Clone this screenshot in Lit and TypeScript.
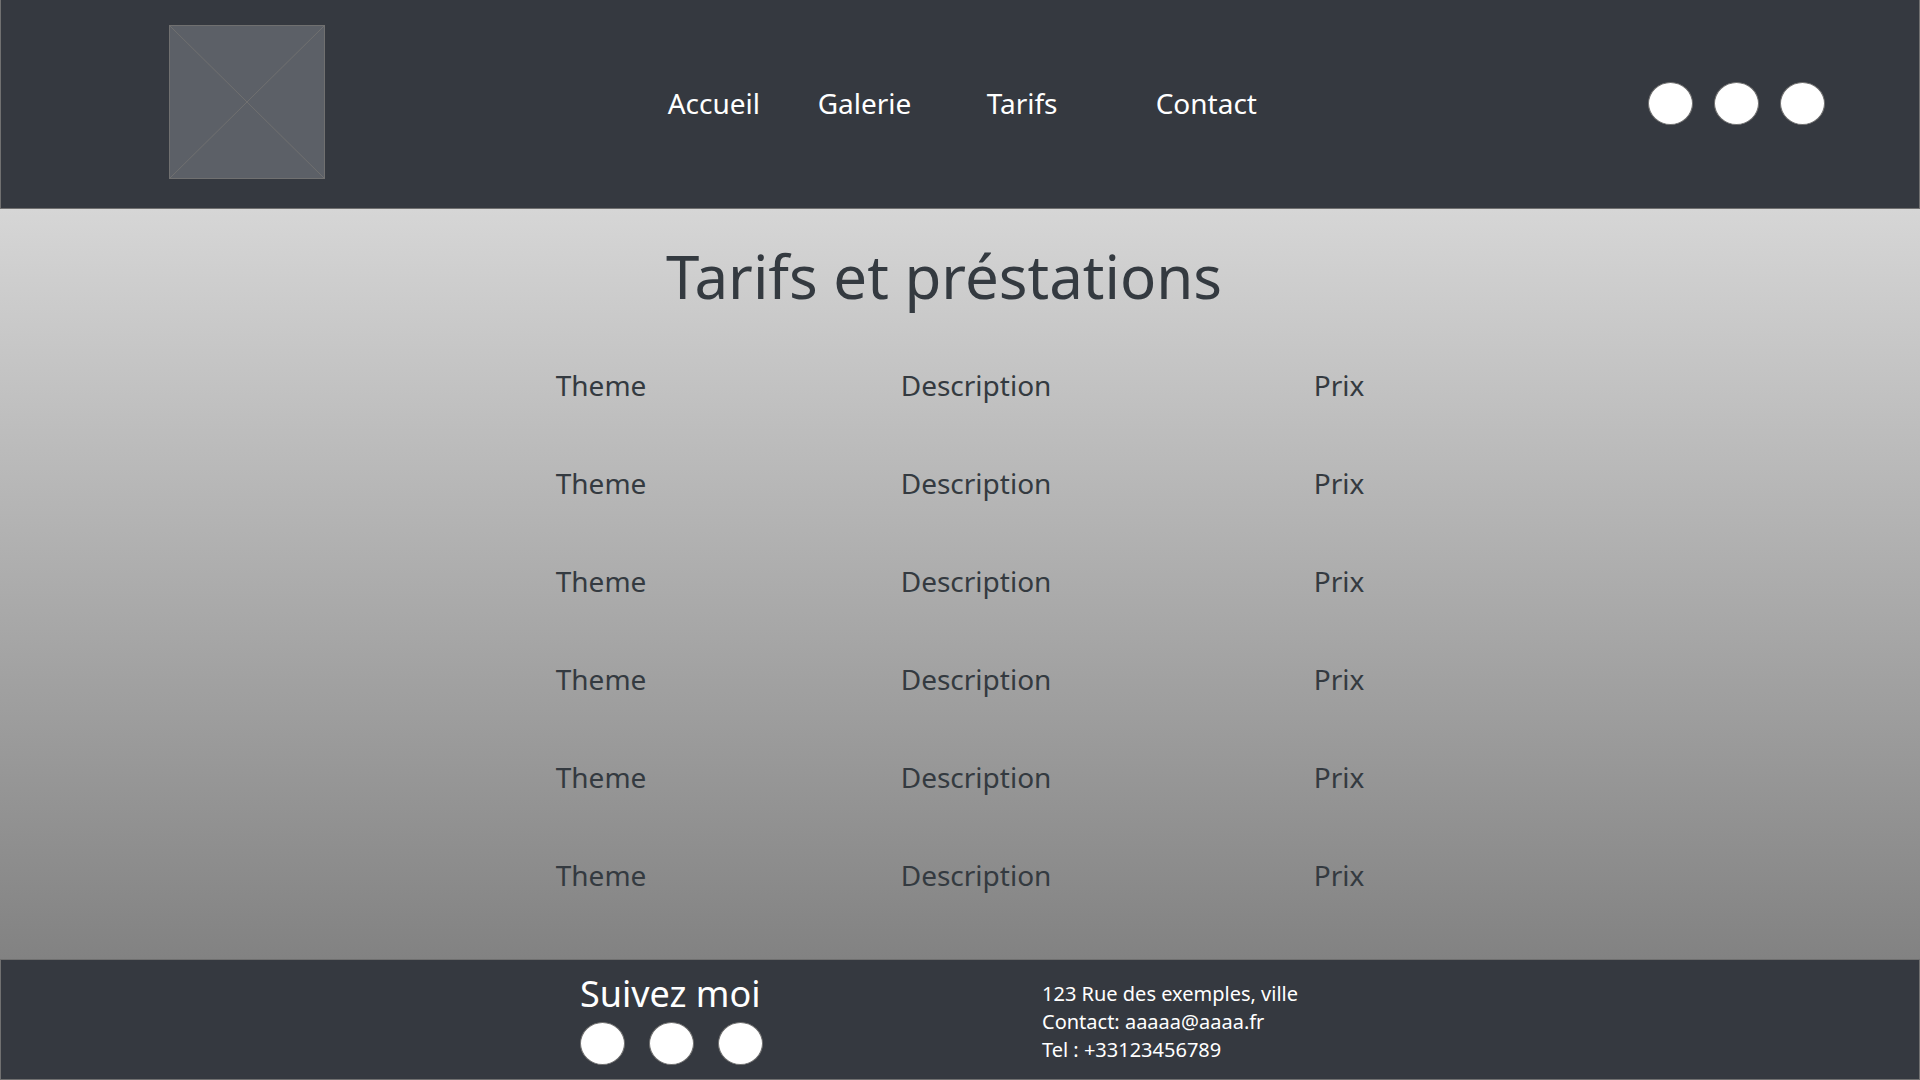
import { LitElement, html, css } from "lit";
import { customElement } from "lit/decorators.js";

const links = ["Accueil", "Galerie", "Tarifs", "Contact"];
const networks = ["Facebook", "Instagram", "Twitter"];
const rates = Array.from({ length: 5 }, () => ({
  theme: "Theme",
  description: "Description",
  price: "Prix",
}));

const dots = (className: string) => html`
  <div class="dots ${className}">
    ${networks.map((name) => html`<a class="dot" href="#" aria-label=${name}></a>`)}
  </div>
`;

@customElement("app-root")
export class AppRoot extends LitElement {
  static styles = css`
    :host {
      display: flex;
      flex-direction: column;
      min-height: 100vh;
      font-family: "Segoe UI", "Noto Sans", "Open Sans", sans-serif;
      font-size: 28px;
      line-height: 38px;
      color: #343a40;
    }
    * {
      box-sizing: border-box;
    }
    a {
      color: inherit;
      text-decoration: none;
    }
    .header,
    .footer {
      background: #353940;
      border: 1px solid #707070;
      color: #fff;
    }
    .header {
      display: grid;
      grid-template-columns: 499fr 981fr auto;
      align-items: center;
      padding: 25px 94px 29px 168px;
      border-top: 0;
    }
    .logo {
      display: block;
      width: 156px;
      height: 154px;
    }
    .nav {
      display: grid;
      grid-template-columns: 150px 169px 169px auto;
      justify-content: start;
      padding-top: 2px;
    }
    .dots {
      display: flex;
    }
    .dots.top {
      gap: 21px;
      padding-top: 2px;
    }
    .dots.bottom {
      gap: 24px;
    }
    .dot {
      width: 45px;
      height: 43px;
      border: 1px solid #707070;
      border-radius: 50%;
      background: #fff;
    }
    .main {
      flex: 1;
      display: flex;
      flex-direction: column;
      align-items: center;
      padding: 26px 0 33px;
      background: linear-gradient(#d6d6d6, #828282);
    }
    .title {
      margin: 0;
      padding-right: 32px;
      font-size: 60px;
      line-height: 82px;
      font-weight: 400;
    }
    .rates {
      margin-top: 19px;
      border-collapse: collapse;
    }
    .rates th,
    .rates td {
      height: 98px;
      padding: 0;
      font-weight: 400;
      text-align: left;
    }
    .theme {
      width: 345px;
    }
    .description {
      width: 413px;
    }
    .footer {
      display: grid;
      grid-template-columns: 579fr 462fr 877fr;
      align-items: start;
      padding: 10px 0 14px;
    }
    .follow {
      grid-column: 2;
    }
    .follow-title {
      margin: 0 0 4px;
      font-size: 36px;
      line-height: 48px;
      font-weight: 400;
    }
    .address {
      padding-top: 10px;
      font-size: 20px;
      line-height: 28px;
      font-style: normal;
    }
    .line {
      display: block;
    }
  `;

  render() {
    return html`
      <header class="header">
        <svg class="logo" viewBox="0 0 156 154" role="img" aria-label="Logo">
          <rect x="0.5" y="0.5" width="155" height="153" fill="#5c6067" stroke="#707070" />
          <path d="M0.5 0.5 155.5 153.5M155.5 0.5 0.5 153.5" fill="none" stroke="#707070" />
        </svg>
        <nav class="nav">${links.map((text) => html`<a href="#">${text}</a>`)}</nav>
        ${dots("top")}
      </header>
      <main class="main">
        <h1 class="title">Tarifs et préstations</h1>
        <table class="rates">
          <thead>
            <tr>
              <th class="theme" scope="col">Theme</th>
              <th class="description" scope="col">Description</th>
              <th scope="col">Prix</th>
            </tr>
          </thead>
          <tbody>
            ${rates.map(
              (rate) => html`<tr>
                <td>${rate.theme}</td>
                <td>${rate.description}</td>
                <td>${rate.price}</td>
              </tr>`
            )}
          </tbody>
        </table>
      </main>
      <footer class="footer">
        <section class="follow">
          <h2 class="follow-title">Suivez moi</h2>
          ${dots("bottom")}
        </section>
        <address class="address">
          <span class="line">123 Rue des exemples, ville</span>
          <span class="line">Contact: <a href="mailto:aaaaa@aaaa.fr">aaaaa@aaaa.fr</a></span>
          <span class="line">Tel : <a href="tel:+33123456789">+33123456789</a></span>
        </address>
      </footer>
    `;
  }
}
